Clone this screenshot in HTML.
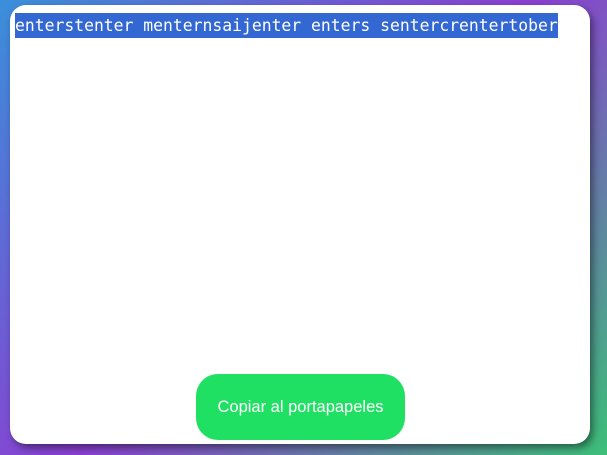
<!DOCTYPE html>
<html><head><style>
html,body{margin:0;padding:0;}
body{width:607px;height:455px;overflow:hidden;position:relative;
background:linear-gradient(135deg,#3a8fda 0%,#8b3fd2 50%,#3cbf78 100%);}
.card{position:absolute;left:10px;top:5px;width:580px;height:439px;background:#fff;border-radius:16px;box-shadow:3px 4px 8px rgba(0,0,0,0.45);}
.txt{position:absolute;left:15px;top:13px;height:25px;line-height:25px;font-family:"DejaVu Sans Mono","Liberation Mono",monospace;font-size:16.4px;color:#fff;background:#3367d2;white-space:pre;}
.btn{position:absolute;left:196px;top:374px;width:209px;height:66px;border-radius:22px;background:#20e063;color:#fff;font-family:"Liberation Sans",sans-serif;font-size:16.5px;display:flex;align-items:center;justify-content:center;}
</style></head><body>
<div class="card"></div>
<div class="txt">enterstenter menternsaijenter enters sentercrentertober</div>
<div class="btn">Copiar al portapapeles</div>
</body></html>
